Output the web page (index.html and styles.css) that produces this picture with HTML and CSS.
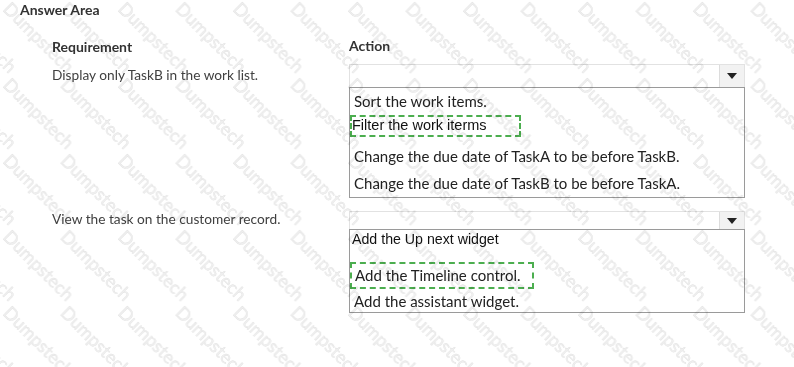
FILE: index.html
```html
<!DOCTYPE html>
<html lang="en">
<head>
    <meta charset="UTF-8">
    <title>Answer Area</title>
    <link rel="stylesheet" href="styles.css">
</head>
<body>
    <div class="page">
        <div class="title">Answer Area</div>

        <div class="row head">
            <div class="req">Requirement</div>
            <div class="act">Action</div>
        </div>

        <div class="row first">
            <div class="req">Display only TaskB in the work list.</div>
            <div class="act">
                <div class="select tall"><span class="btn"><span class="caret"></span></span></div>
                <ul class="options list-one">
                    <li class="h26">Sort the work items.</li>
                    <li class="pick"><span class="answer filter">Filter the work iterms</span></li>
                    <li class="h29">Change the due date of TaskA to be before TaskB.</li>
                    <li>Change the due date of TaskB to be before TaskA.</li>
                </ul>
            </div>
        </div>

        <div class="row second">
            <div class="req">View the task on the customer record.</div>
            <div class="act">
                <div class="select short"><span class="btn"><span class="caret"></span></span></div>
                <ul class="options list-two">
                    <li class="arial top">Add the Up next widget</li>
                    <li class="pick tl"><span class="answer timeline">Add the Timeline control.</span></li>
                    <li class="last">Add the assistant widget.</li>
                </ul>
            </div>
        </div>

        <!-- watermark over the whole screenshot -->
        <svg class="watermark" width="794" height="367">
            <defs>
                <pattern id="wm" patternUnits="userSpaceOnUse" x="0" y="0" width="57.5" height="76">
                    <g class="wm-text">
                        <text x="2" y="10" transform="rotate(45 2 10)">Dumpstech</text>
                        <text x="-55.5" y="10" transform="rotate(45 -55.5 10)">Dumpstech</text>
                        <text x="-113" y="10" transform="rotate(45 -113 10)">Dumpstech</text>
                        <text x="59.5" y="10" transform="rotate(45 59.5 10)">Dumpstech</text>
                        <text x="2" y="-66" transform="rotate(45 2 -66)">Dumpstech</text>
                        <text x="-55.5" y="-66" transform="rotate(45 -55.5 -66)">Dumpstech</text>
                        <text x="-113" y="-66" transform="rotate(45 -113 -66)">Dumpstech</text>
                        <text x="59.5" y="-66" transform="rotate(45 59.5 -66)">Dumpstech</text>
                        <text x="2" y="86" transform="rotate(45 2 86)">Dumpstech</text>
                        <text x="-55.5" y="86" transform="rotate(45 -55.5 86)">Dumpstech</text>
                    </g>
                </pattern>
            </defs>
            <rect width="794" height="367" fill="url(#wm)"></rect>
        </svg>
    </div>
</body>
</html>
```

FILE: styles.css
```css
body {
    margin: 0;
    background-color: #ffffff;
    font-family: 'Lato', 'Open Sans', sans-serif;
    color: #404040;
}
.page {
    position: relative;
    width: 794px;
    height: 367px;
    overflow: hidden;
    padding: 0 0 0 20px;
    box-sizing: border-box;
}
.title {
    font-size: 14px;
    font-weight: 700;
    line-height: 20px;
    color: #333;
}
.row {
    display: flex;
}
.req {
    width: 329px;
    padding-left: 32px;
    box-sizing: border-box;
    font-size: 13.7px;
    line-height: 20px;
}
.act {
    width: 396px;
}
.head {
    margin-top: 17px;
    color: #333;
}
.head .req,
.head .act {
    font-weight: 700;
    font-size: 14px;
}
.first {
    margin-top: 7px;
}
.first .req {
    padding-top: 1px;
}
.second {
    margin-top: 13px;
}
.second .req {
    margin-top: -2px;
}
.select {
    display: flex;
    justify-content: flex-end;
    border: 1px solid #e2e2e2;
    border-bottom: none;
    box-sizing: border-box;
}
.select.tall {
    height: 23px;
}
.select.short {
    height: 18px;
}
.btn {
    width: 24px;
    background-color: #f2f2f2;
    border-left: 1px solid #dcdcdc;
    display: flex;
    justify-content: center;
    align-items: center;
}
.caret {
    width: 0;
    height: 0;
    border-left: 5px solid transparent;
    border-right: 5px solid transparent;
    border-top: 6px solid #222;
}
.options {
    list-style: none;
    margin: 0;
    padding: 0;
    border: 1px solid #9a9a9a;
    color: #222;
    font-size: 15px;
}
.options li {
    height: 27px;
    line-height: 27px;
    padding-left: 4px;
}
.options li.h26 {
    height: 26px;
    line-height: 26px;
}
.options li.h29 {
    height: 29px;
    line-height: 31px;
}
.options li.pick {
    padding: 1px 0 0 0;
    height: 26px;
    line-height: normal;
    box-sizing: content-box;
}
.answer {
    display: block;
    border: 2px dashed #4cae4f;
    box-sizing: border-box;
    font-family: 'Liberation Sans', Arial, sans-serif;
    font-size: 14.5px;
    color: #111;
}
.answer.filter {
    width: 171px;
    height: 22px;
    line-height: 17px;
}
.answer.timeline {
    width: 184px;
    height: 27px;
    line-height: 22px;
    padding-left: 3px;
    font-family: 'Lato', 'Open Sans', sans-serif;
    font-size: 15px;
    color: #222;
}
.options li.tl {
    padding-top: 2px;
    height: 28px;
}
.options li.arial {
    font-family: 'Liberation Sans', Arial, sans-serif;
    font-size: 14.2px;
    color: #111;
    padding-left: 2px;
}
.options li.top {
    height: 30px;
    line-height: 18px;
}
.options li.last {
    height: 22px;
    line-height: 22px;
}
.watermark {
    position: absolute;
    top: 0;
    left: 0;
    pointer-events: none;
    mix-blend-mode: multiply;
}
.wm-text {
    font-family: 'Lato', sans-serif;
    font-size: 18px;
    fill: #f0f0f0;
    stroke: #dedede;
    stroke-width: 0.35;
}
```
